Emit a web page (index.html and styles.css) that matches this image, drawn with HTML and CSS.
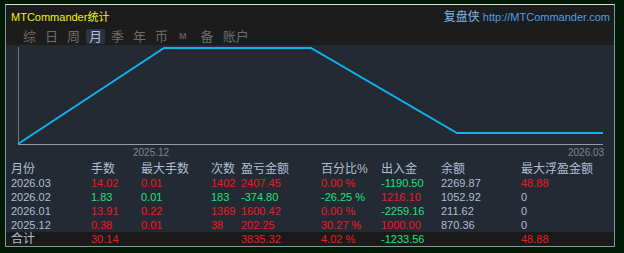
FILE: index.html
```html
<!DOCTYPE html>
<html lang="zh">
<head>
    <meta charset="UTF-8">
    <title>MTCommander统计</title>
    <link rel="stylesheet" href="styles.css">
</head>
<body>
    <div class="panel">
        <div class="top">
            <div class="titlebar">
                <span class="title">MTCommander统计</span>
                <span class="site"><span class="brand">复盘侠</span> http://MTCommander.com</span>
            </div>
            <div class="tabs">
                <span class="tab">综</span>
                <span class="tab">日</span>
                <span class="tab">周</span>
                <span class="tab active">月</span>
                <span class="tab">季</span>
                <span class="tab">年</span>
                <span class="tab">币</span>
                <span class="tab small">M</span>
                <span class="tab">备</span>
                <span class="tab">账户</span>
            </div>
        </div>
        <svg class="chart" width="608" height="117" viewBox="0 0 608 117">
            <line x1="12.5" y1="2" x2="12.5" y2="99" stroke="#6e747c" stroke-width="1"/>
            <line x1="12" y1="99.5" x2="597" y2="99.5" stroke="#9a9a9a" stroke-width="1"/>
            <polyline points="12,99 158,3 305,3 451,88 597,88" fill="none" stroke="#0cb4ee" stroke-width="2"/>
            <text x="127" y="111" class="axis">2025.12</text>
            <text x="562" y="111" class="axis">2026.03</text>
        </svg>
        <div class="table">
            <div class="row head">
                <span>月份</span><span>手数</span><span>最大手数</span><span>次数</span><span>盈亏金额</span><span>百分比%</span><span>出入金</span><span>余额</span><span>最大浮盈金额</span>
            </div>
            <div class="row">
                <span>2026.03</span><span class="red">14.02</span><span class="red">0.01</span><span class="red">1402</span><span class="red">2407.45</span><span class="red">0.00 %</span><span class="green">-1190.50</span><span>2269.87</span><span class="red">48.88</span>
            </div>
            <div class="row">
                <span>2026.02</span><span class="green">1.83</span><span class="green">0.01</span><span class="green">183</span><span class="green">-374.80</span><span class="green">-26.25 %</span><span class="red">1216.10</span><span>1052.92</span><span>0</span>
            </div>
            <div class="row">
                <span>2026.01</span><span class="red">13.91</span><span class="red">0.22</span><span class="red">1369</span><span class="red">1600.42</span><span class="red">0.00 %</span><span class="green">-2259.16</span><span>211.62</span><span>0</span>
            </div>
            <div class="row">
                <span>2025.12</span><span class="red">0.38</span><span class="red">0.01</span><span class="red">38</span><span class="red">202.25</span><span class="red">30.27 %</span><span class="red">1000.00</span><span>870.36</span><span>0</span>
            </div>
            <div class="row total">
                <span class="cjk">合计</span><span class="red">30.14</span><span></span><span></span><span class="red">3835.32</span><span class="red">4.02 %</span><span class="green">-1233.56</span><span></span><span class="red">48.88</span>
            </div>
        </div>
    </div>
</body>
</html>
```

FILE: styles.css
```css
body {
    margin: 0;
    padding: 0;
    width: 624px;
    height: 253px;
    overflow: hidden;
    background-color: #001a06;
    font-family: "Liberation Sans", "Noto Sans CJK SC", sans-serif;
}
.panel {
    margin: 4px 0 0 5px;
    width: 608px;
    height: 241px;
    border: 1px solid #8797a8;
    border-top-color: #dcdcdc;
    background-color: #242a33;
}
.top {
    background-color: #1c1c1c;
    height: 40px;
}
.titlebar {
    display: flex;
    justify-content: space-between;
    align-items: center;
    height: 21px;
    padding: 0 4px 0 5px;
    font-size: 11px;
}
.title {
    color: #f2f200;
}
.site {
    color: #4d9fe6;
}
.brand {
    color: #7fb6e6;
    font-size: 12px;
}
.tabs {
    display: flex;
    gap: 3px;
    padding-left: 14px;
    margin-top: 3px;
}
.tab {
    padding: 0 3px;
    height: 15px;
    line-height: 15px;
    font-size: 13px;
    color: #6c6c6c;
    border-radius: 2px;
}
.tab.active {
    background-color: #2b3542;
    color: #b4c2d6;
}
.tab.small {
    font-size: 9px;
    font-weight: bold;
    color: #6e5454;
    padding: 0 5px;
    margin-right: 3px;
}
.chart {
    display: block;
}
.axis {
    font-family: "Liberation Sans", sans-serif;
    font-size: 10px;
    fill: #7c8794;
}
.row {
    display: grid;
    grid-template-columns: 80px 50px 70px 30px 80px 60px 60px 80px 1fr;
    height: 14px;
    line-height: 14px;
    padding-left: 5px;
    font-size: 11px;
    color: #b0bed2;
    white-space: nowrap;
}
.row.head {
    font-size: 12px;
}
.row.total {
    background-color: #1a1a1a;
}
.cjk {
    font-size: 12px;
}
.red {
    color: #ec1a24;
}
.green {
    color: #1fe07c;
}
```
